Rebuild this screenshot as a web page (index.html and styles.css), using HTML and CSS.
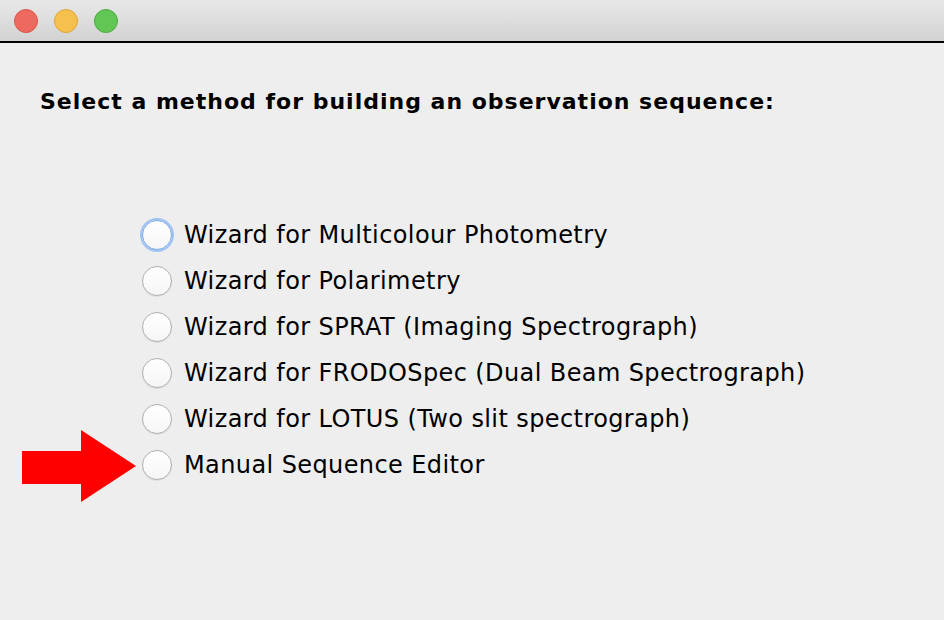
FILE: index.html
```html
<!DOCTYPE html>
<html lang="en">
<head>
    <meta charset="UTF-8">
    <title>Sequence Builder</title>
    <link rel="stylesheet" href="styles.css">
</head>
<body>
    <div class="window">
        <!-- Title bar with the three window buttons -->
        <div class="titlebar">
            <span class="light close"></span>
            <span class="light minimize"></span>
            <span class="light zoom"></span>
        </div>

        <div class="content">
            <h1>Select a method for building an observation sequence:</h1>

            <div class="options">
                <label class="option">
                    <input type="radio" name="method" class="radio focused">
                    <span>Wizard for Multicolour Photometry</span>
                </label>
                <label class="option">
                    <input type="radio" name="method" class="radio">
                    <span>Wizard for Polarimetry</span>
                </label>
                <label class="option">
                    <input type="radio" name="method" class="radio">
                    <span>Wizard for SPRAT (Imaging Spectrograph)</span>
                </label>
                <label class="option">
                    <input type="radio" name="method" class="radio">
                    <span>Wizard for FRODOSpec (Dual Beam Spectrograph)</span>
                </label>
                <label class="option">
                    <input type="radio" name="method" class="radio">
                    <span>Wizard for LOTUS (Two slit spectrograph)</span>
                </label>
                <label class="option">
                    <!-- pointer arrow next to the manual editor -->
                    <svg class="arrow" width="114" height="74" viewBox="0 0 114 74">
                        <polygon points="0,21 59,21 59,0 114,36 59,72 59,54 0,54" fill="#ff0000"/>
                    </svg>
                    <input type="radio" name="method" class="radio">
                    <span>Manual Sequence Editor</span>
                </label>
            </div>
        </div>
    </div>
</body>
</html>
```

FILE: styles.css
```css
html, body {
    margin: 0;
    padding: 0;
    height: 100%;
}

body {
    background-color: #eeeeee;
    font-family: "DejaVu Sans", sans-serif;
    color: #000;
}

.window {
    height: 100%;
    overflow: hidden;
}

.titlebar {
    height: 41px;
    background: linear-gradient(#e8e8e8, #d2d2d2);
    border-bottom: 2px solid #000;
    display: flex;
    align-items: center;
    gap: 16px;
    padding-left: 14px;
}

.light {
    width: 24px;
    height: 24px;
    border-radius: 50%;
    box-sizing: border-box;
}

.close {
    background: #ee6a5f;
    border: 1px solid #d8564c;
}

.minimize {
    background: #f6c04f;
    border: 1px solid #dca73a;
}

.zoom {
    background: #62c654;
    border: 1px solid #4eaa42;
}

.content {
    padding: 44px 0 0 40px;
}

h1 {
    font-size: 22px;
    font-weight: bold;
    letter-spacing: 1px;
    margin: 0;
    line-height: 30px;
}

.options {
    display: flex;
    flex-direction: column;
    gap: 16px;
    margin: 103px 0 0 102px;
}

.option {
    position: relative;
    display: flex;
    align-items: center;
    gap: 12px;
    font-size: 24px;
    letter-spacing: 0.4px;
    height: 30px;
}

.radio {
    appearance: none;
    margin: 0;
    width: 30px;
    height: 30px;
    border-radius: 50%;
    border: 1px solid #b0b0b0;
    background: linear-gradient(#ffffff, #f6f6f6);
    box-shadow: 0 1px 1px rgba(0, 0, 0, 0.08);
}

.radio.focused {
    border-color: #79a9e8;
    box-shadow: 0 0 0 2px #9ec3f2;
}

.arrow {
    position: absolute;
    left: -120px;
    top: -20px;
}
```
